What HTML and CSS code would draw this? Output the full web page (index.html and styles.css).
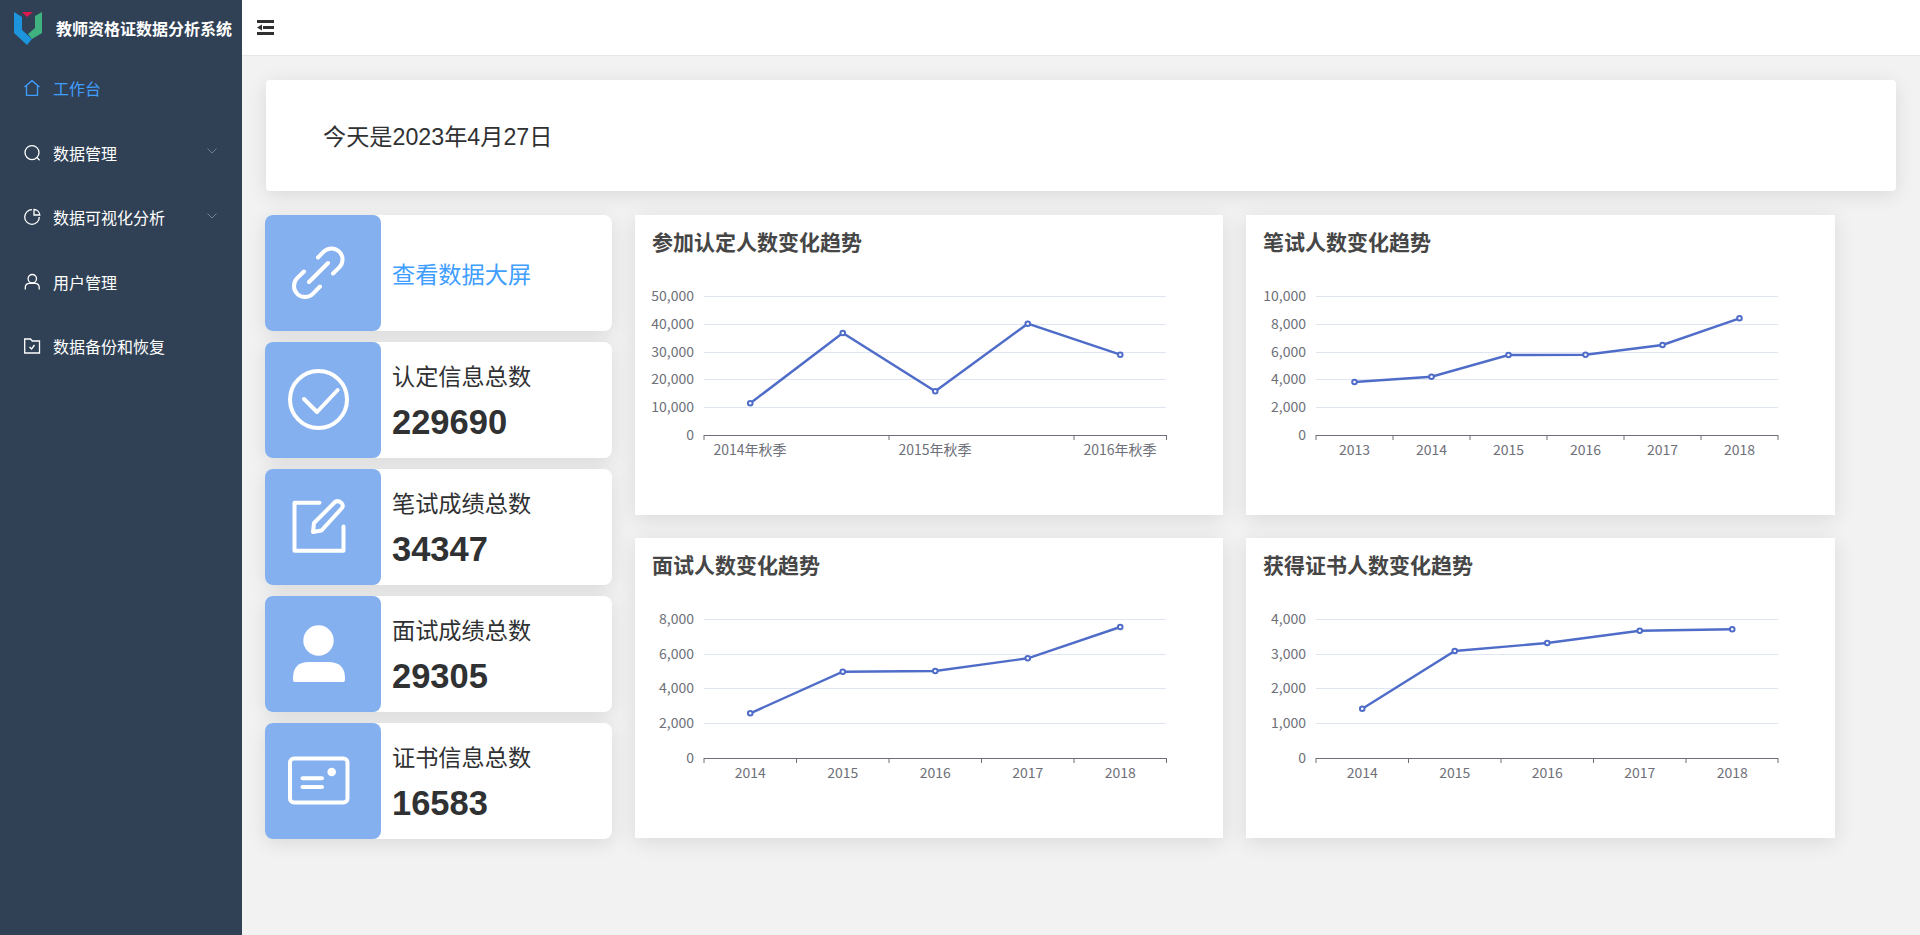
FILE: index.html
```html
<!DOCTYPE html>
<html>
<head>
    <meta charset="utf-8">
    <title>教师资格证数据分析系统</title>
    <link rel="stylesheet" href="styles.css">
</head>
<body>
    <div class="app">
        <aside class="sidebar">
            <div class="logo">
                <svg class="logo-mark" viewBox="0 0 28 33">
                    <polygon fill="#1c95dc" points="0,0 0,21 13,33 18,27 8,18 8,5"/>
                    <polygon fill="#3fb27f" points="28,0 28,21 18,27 14,22 21,16 21,4"/>
                    <polygon fill="#e0174f" points="8,0 19,0 13,5"/>
                </svg>
                <span class="logo-title">教师资格证数据分析系统</span>
            </div>
            <nav>
                <a class="menu-item active">
                    <svg class="menu-icon" viewBox="0 0 16 16"><path d="M0.5 7 L8 0.7 L15.5 7 M2.5 5.5 V15.3 H13.5 V5.5"/></svg>
                    <span>工作台</span>
                </a>
                <a class="menu-item">
                    <svg class="menu-icon" viewBox="0 0 16 16"><circle cx="8" cy="7.6" r="7"/><path d="M13 12.6 L15.6 15.2"/></svg>
                    <span>数据管理</span>
                    <svg class="chevron" viewBox="0 0 10 6"><path d="M0.5 0.5 L5 5 L9.5 0.5"/></svg>
                </a>
                <a class="menu-item">
                    <svg class="menu-icon" viewBox="0 0 16 16"><path d="M8 0.7 A7.3 7.3 0 1 0 15.3 8 M10 0.5 V6 H15.8 A6 6 0 0 0 10 0.5 Z"/></svg>
                    <span>数据可视化分析</span>
                    <svg class="chevron" viewBox="0 0 10 6"><path d="M0.5 0.5 L5 5 L9.5 0.5"/></svg>
                </a>
                <a class="menu-item">
                    <svg class="menu-icon" viewBox="0 0 16 16"><circle cx="8.3" cy="4.7" r="4.2"/><path d="M1.3 15.5 V13.5 Q1.3 9.3 5.5 9.3 H11 Q15.2 9.3 15.2 13.5 V15.5"/></svg>
                    <span>用户管理</span>
                </a>
                <a class="menu-item">
                    <svg class="menu-icon" viewBox="0 0 16 16"><path d="M0.7 1 H6.5 L8.3 3 H15.5 V15 H0.7 Z M5.5 9 L7.6 11 L10.5 7"/></svg>
                    <span>数据备份和恢复</span>
                </a>
            </nav>
        </aside>

        <div class="main">
            <header class="topbar">
                <svg class="fold-icon" viewBox="0 0 17 15">
                    <rect x="0" y="0" width="17" height="3"/>
                    <polygon points="0,7.5 5,4.5 5,10.5"/>
                    <rect x="6" y="6" width="11" height="3"/>
                    <rect x="0" y="12" width="17" height="3"/>
                </svg>
            </header>

            <div class="content">
                <div class="date-card">今天是2023年4月27日</div>

                <div class="dashboard">
                    <div class="stats">
                        <div class="stat-card">
                            <div class="stat-icon">
                                <svg viewBox="0 0 116 116"><path d="M53 42.5 L58.7 36.7 A11 11 0 0 1 74.3 52.3 L68 58.5 M39 56.5 L32.2 63.2 A11 11 0 0 0 47.8 78.8 L55 71.5 M44 67 L63 48"/></svg>
                            </div>
                            <div class="stat-body"><span class="stat-link">查看数据大屏</span></div>
                        </div>
                        <div class="stat-card">
                            <div class="stat-icon">
                                <svg viewBox="0 0 116 116"><circle cx="53.5" cy="57.5" r="28.5"/><path d="M39 57 L52 70 L72.7 48"/></svg>
                            </div>
                            <div class="stat-body"><div class="stat-label">认定信息总数</div><div class="stat-value">229690</div></div>
                        </div>
                        <div class="stat-card">
                            <div class="stat-icon">
                                <svg viewBox="0 0 116 116"><path d="M54.5 33.7 H29.5 V81.7 H78.5 V57.5 M48 63 L49 54 L70 33 Q73 31 76 33.5 Q79 36 77 39 L56.5 61.5 Z"/></svg>
                            </div>
                            <div class="stat-body"><div class="stat-label">笔试成绩总数</div><div class="stat-value">34347</div></div>
                        </div>
                        <div class="stat-card">
                            <div class="stat-icon">
                                <svg viewBox="0 0 116 116"><circle class="solid" cx="53.5" cy="44.5" r="15.2"/><path class="solid" d="M30 86 Q28 86 28 84 V82 Q28 66 44 66 H63 Q80 66 80 82 V84 Q80 86 78 86 Z"/></svg>
                            </div>
                            <div class="stat-body"><div class="stat-label">面试成绩总数</div><div class="stat-value">29305</div></div>
                        </div>
                        <div class="stat-card">
                            <div class="stat-icon">
                                <svg viewBox="0 0 116 116"><rect x="25" y="35.5" width="57.5" height="44" rx="4"/><path d="M37.5 55.3 H57 M37.5 64 H57"/><circle class="solid" cx="66.7" cy="49" r="4.3"/></svg>
                            </div>
                            <div class="stat-body"><div class="stat-label">证书信息总数</div><div class="stat-value">16583</div></div>
                        </div>
                    </div>

                    <div class="chart-card">
                        <h3>参加认定人数变化趋势</h3>
                        <svg class="chart" viewBox="0 54 588 246">
                            <path class="grid-line" d="M69 81.5 H531 M69 109.5 H531 M69 137.5 H531 M69 164.5 H531 M69 192.5 H531"/>
                            <path class="axis-line" d="M69 220.5 H531.5 M69 220 V225 M254 220 V225 M439 220 V225 M531.5 220 V225"/>
                            <g class="y-labels">
                                <text x="59" y="86">50,000</text>
                                <text x="59" y="114">40,000</text>
                                <text x="59" y="142">30,000</text>
                                <text x="59" y="169">20,000</text>
                                <text x="59" y="197">10,000</text>
                                <text x="59" y="225">0</text>
                            </g>
                            <g class="x-labels">
                                <text x="115" y="240">2014年秋季</text>
                                <text x="300" y="240">2015年秋季</text>
                                <text x="485" y="240">2016年秋季</text>
                            </g>
                            <polyline class="series" points="115.25,188.3 207.75,118 300.25,176.3 392.75,108.7 485.25,139.7"/>
                            <g class="dots">
                                <circle cx="115.25" cy="188.3" r="2.3"/><circle cx="207.75" cy="118" r="2.3"/><circle cx="300.25" cy="176.3" r="2.3"/><circle cx="392.75" cy="108.7" r="2.3"/><circle cx="485.25" cy="139.7" r="2.3"/>
                            </g>
                        </svg>
                    </div>

                    <div class="chart-card">
                        <h3>笔试人数变化趋势</h3>
                        <svg class="chart" viewBox="0 54 588 246">
                            <path class="grid-line" d="M70 81.5 H532 M70 109.5 H532 M70 137.5 H532 M70 164.5 H532 M70 192.5 H532"/>
                            <path class="axis-line" d="M70 220.5 H532 M70 220 V225 M147 220 V225 M224 220 V225 M301 220 V225 M378 220 V225 M455 220 V225 M532 220 V225"/>
                            <g class="y-labels">
                                <text x="60" y="86">10,000</text>
                                <text x="60" y="114">8,000</text>
                                <text x="60" y="142">6,000</text>
                                <text x="60" y="169">4,000</text>
                                <text x="60" y="197">2,000</text>
                                <text x="60" y="225">0</text>
                            </g>
                            <g class="x-labels">
                                <text x="108.5" y="240">2013</text>
                                <text x="185.5" y="240">2014</text>
                                <text x="262.5" y="240">2015</text>
                                <text x="339.5" y="240">2016</text>
                                <text x="416.5" y="240">2017</text>
                                <text x="493.5" y="240">2018</text>
                            </g>
                            <polyline class="series" points="108.5,167 185.5,161.7 262.5,140 339.5,139.7 416.5,130 493.5,103.3"/>
                            <g class="dots">
                                <circle cx="108.5" cy="167" r="2.3"/><circle cx="185.5" cy="161.7" r="2.3"/><circle cx="262.5" cy="140" r="2.3"/><circle cx="339.5" cy="139.7" r="2.3"/><circle cx="416.5" cy="130" r="2.3"/><circle cx="493.5" cy="103.3" r="2.3"/>
                            </g>
                        </svg>
                    </div>

                    <div class="chart-card">
                        <h3>面试人数变化趋势</h3>
                        <svg class="chart" viewBox="0 54 588 246">
                            <path class="grid-line" d="M69 81.5 H531 M69 116.5 H531 M69 150.5 H531 M69 185.5 H531"/>
                            <path class="axis-line" d="M69 220.5 H531.5 M69 220 V225 M161.5 220 V225 M254 220 V225 M346.5 220 V225 M439 220 V225 M531.5 220 V225"/>
                            <g class="y-labels">
                                <text x="59" y="86">8,000</text>
                                <text x="59" y="121">6,000</text>
                                <text x="59" y="155">4,000</text>
                                <text x="59" y="190">2,000</text>
                                <text x="59" y="225">0</text>
                            </g>
                            <g class="x-labels">
                                <text x="115.25" y="240">2014</text>
                                <text x="207.75" y="240">2015</text>
                                <text x="300.25" y="240">2016</text>
                                <text x="392.75" y="240">2017</text>
                                <text x="485.25" y="240">2018</text>
                            </g>
                            <polyline class="series" points="115.25,175.3 207.75,133.7 300.25,133 392.75,120.3 485.25,89"/>
                            <g class="dots">
                                <circle cx="115.25" cy="175.3" r="2.3"/><circle cx="207.75" cy="133.7" r="2.3"/><circle cx="300.25" cy="133" r="2.3"/><circle cx="392.75" cy="120.3" r="2.3"/><circle cx="485.25" cy="89" r="2.3"/>
                            </g>
                        </svg>
                    </div>

                    <div class="chart-card">
                        <h3>获得证书人数变化趋势</h3>
                        <svg class="chart" viewBox="0 54 588 246">
                            <path class="grid-line" d="M70 81.5 H532 M70 116.5 H532 M70 150.5 H532 M70 185.5 H532"/>
                            <path class="axis-line" d="M70 220.5 H532 M70 220 V225 M162.5 220 V225 M255 220 V225 M347.5 220 V225 M440 220 V225 M532 220 V225"/>
                            <g class="y-labels">
                                <text x="60" y="86">4,000</text>
                                <text x="60" y="121">3,000</text>
                                <text x="60" y="155">2,000</text>
                                <text x="60" y="190">1,000</text>
                                <text x="60" y="225">0</text>
                            </g>
                            <g class="x-labels">
                                <text x="116.25" y="240">2014</text>
                                <text x="208.75" y="240">2015</text>
                                <text x="301.25" y="240">2016</text>
                                <text x="393.75" y="240">2017</text>
                                <text x="486.25" y="240">2018</text>
                            </g>
                            <polyline class="series" points="116.25,170.7 208.75,113 301.25,105 393.75,92.7 486.25,91.3"/>
                            <g class="dots">
                                <circle cx="116.25" cy="170.7" r="2.3"/><circle cx="208.75" cy="113" r="2.3"/><circle cx="301.25" cy="105" r="2.3"/><circle cx="393.75" cy="92.7" r="2.3"/><circle cx="486.25" cy="91.3" r="2.3"/>
                            </g>
                        </svg>
                    </div>
                </div>
            </div>
        </div>
    </div>
</body>
</html>
```

FILE: styles.css
```css
* {
    box-sizing: border-box;
}

body {
    margin: 0;
    font-family: "Liberation Sans", "Noto Sans CJK SC", sans-serif;
    background-color: #f2f2f2;
    overflow: hidden;
}

.app {
    display: flex;
    height: 935px;
}

/* sidebar */
.sidebar {
    width: 242px;
    flex-shrink: 0;
    background-color: #304156;
    color: #fff;
}

.logo {
    display: flex;
    align-items: center;
    height: 56px;
    padding-left: 14px;
}

.logo-mark {
    width: 28px;
    height: 33px;
    margin-right: 14px;
}

.logo-title {
    font-size: 16px;
    font-weight: bold;
    white-space: nowrap;
}

.menu-item {
    display: flex;
    align-items: center;
    height: 64.5px;
    padding: 0 25px 0 24px;
    font-size: 16px;
    color: #fff;
}

.menu-item.active {
    color: #409eff;
}

.menu-icon {
    width: 16px;
    height: 16px;
    margin-right: 13px;
    fill: none;
    stroke: currentColor;
    stroke-width: 1.3;
    overflow: visible;
}

.chevron {
    width: 10px;
    height: 6px;
    margin-left: auto;
    margin-top: -3px;
    fill: none;
    stroke: #6f7d8f;
    stroke-width: 1;
}

/* top bar */
.main {
    flex: 1;
    min-width: 0;
}

.topbar {
    display: flex;
    align-items: center;
    height: 56px;
    padding-left: 15px;
    background-color: #fff;
    border-bottom: 1px solid #e6e6e6;
}

.fold-icon {
    width: 17px;
    height: 15px;
    margin-bottom: 1px;
    fill: #303133;
}

.content {
    padding: 24px 24px 0 24px;
}

.date-card {
    display: flex;
    align-items: center;
    height: 111px;
    padding: 0 0 2px 57px;
    margin-bottom: 24px;
    font-size: 23.2px;
    color: #303133;
    background-color: #fff;
    border-radius: 4px;
    box-shadow: 0 4px 20px rgba(0, 0, 0, 0.1);
}

.dashboard {
    display: grid;
    grid-template-columns: 347px 588px 589px;
    grid-template-rows: 300px 300px;
    column-gap: 23px;
    row-gap: 23px;
    margin-left: -1px;
}

/* stat cards */
.stats {
    grid-row: 1 / span 2;
    display: flex;
    flex-direction: column;
    gap: 11px;
}

.stat-card {
    display: flex;
    height: 116px;
    background-color: #fff;
    border-radius: 8px;
    box-shadow: 0 4px 20px rgba(0, 0, 0, 0.1);
}

.stat-icon {
    width: 116px;
    flex-shrink: 0;
    background-color: #84b0ef;
    border-radius: 8px;
}

.stat-icon svg {
    display: block;
    width: 116px;
    height: 116px;
    fill: none;
    stroke: #fff;
    stroke-width: 4;
    stroke-linecap: round;
    stroke-linejoin: round;
}

.stat-icon .solid {
    fill: #fff;
    stroke: none;
}

.stat-body {
    display: flex;
    flex-direction: column;
    justify-content: center;
    padding-left: 11px;
}

.stat-link {
    font-size: 23.2px;
    color: #409eff;
}

.stat-label {
    font-size: 23.2px;
    line-height: 34px;
    color: #303133;
    margin-top: 1px;
}

.stat-value {
    margin-top: 8px;
    font-size: 34.5px;
    font-weight: bold;
    line-height: 40px;
    color: #303133;
}

/* chart cards */
.chart-card {
    background-color: #fff;
    box-shadow: 0 4px 20px rgba(0, 0, 0, 0.1);
}

.chart-card h3 {
    height: 54px;
    margin: 0;
    padding: 11px 0 0 17px;
    font-family: "Noto Sans CJK SC", sans-serif;
    font-size: 21px;
    line-height: 30px;
    font-weight: bold;
    color: #464646;
}

.chart {
    display: block;
    width: 588px;
    height: 246px;
}

.chart text {
    font-family: "Noto Sans CJK SC", sans-serif;
    font-size: 14px;
    fill: #6e7079;
}

.y-labels text {
    text-anchor: end;
}

.x-labels text {
    text-anchor: middle;
}

.grid-line {
    fill: none;
    stroke: #e0e6f1;
    stroke-width: 1;
}

.axis-line {
    fill: none;
    stroke: #6e7079;
    stroke-width: 1;
}

.series {
    fill: none;
    stroke: #4f6dc8;
    stroke-width: 2.4;
}

.dots circle {
    fill: #fff;
    stroke: #4f6dc8;
    stroke-width: 2;
}
```
